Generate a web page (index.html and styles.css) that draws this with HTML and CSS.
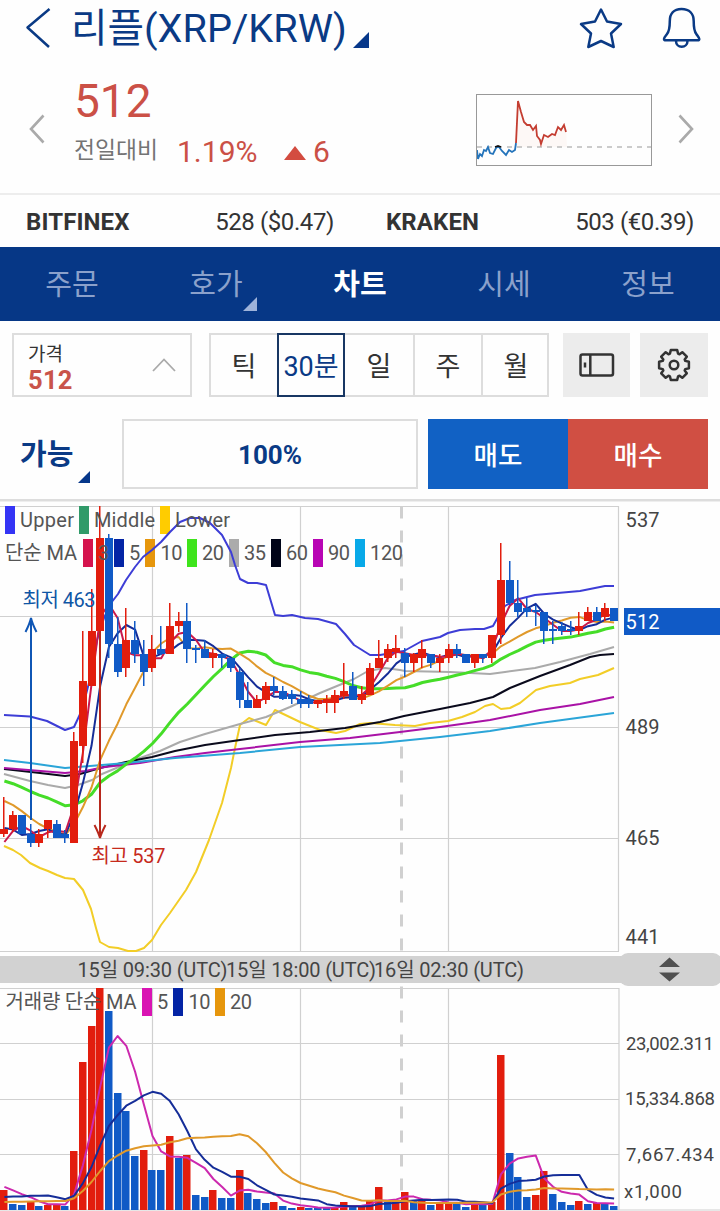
FILE: index.html
```html
<!DOCTYPE html>
<html lang="ko">
<head>
<meta charset="utf-8">
<title>리플(XRP/KRW)</title>
<link rel="stylesheet" href="styles.css">
</head>
<body>
<header class="top">
  <svg class="back" viewBox="0 0 26 42"><path d="M24.5 2 2.5 20.5 24 40"/></svg>
  <h1 class="title">리플(XRP/KRW)</h1>
  <i class="caret caret-title"></i>
  <svg class="star" viewBox="578 6 46 44"><path d="M601 9.5 607 21.5 621 24 611 33.5 613.7 47 601 41 588.3 47 591 33.5 581 24 595 21.5Z"/></svg>
  <svg class="bell" viewBox="662 6 40 44"><path d="M681.500 9C673.500 9 669.800 14 669.800 21C669.800 28 669.500 31 667 34C665 36.500 664 37.500 664 39Q664 40.300 666 40.300H697.500Q699.300 40.300 699.300 39C699.300 37.500 698 36.500 696.300 34C694 31 693.700 28 693.700 21C693.700 14 689.500 9 681.500 9ZM676 41C676 44.500 678.500 46.800 681.700 46.800S687.500 44.500 687.500 41"/></svg>
</header>

<section class="quote">
  <svg class="arrow" viewBox="0 0 18 32"><path d="M15.500 2.500 3 16 15.500 29.500"/></svg>
  <div class="quote-main">
    <div class="quote-price">512</div>
    <div class="quote-change"><span class="vs">전일대비</span><span class="pct">1.19%</span><i class="up"></i><span class="diff">6</span></div>
  </div>
  <svg class="spark" viewBox="0 0 176 72">
    <path class="spark-fill" d="M38 53 42 6 47 24 52 31 58 36 62 45 65 50 72 42 82 38 90 34 91 53Z"/>
    <path class="spark-base" d="M1 53H175"/>
    <path class="spark-low" d="M1 56 2 65 4 60 6 62 8 56 10 57 12 53 14 59 17 60 20 54 21 53 23 53 26 57 30 61 33 56 36 58 39 56 40 49"/>
    <path class="spark-mid" d="M19 53 22 52 25 53"/>
    <path class="spark-high" d="M40 49 42 7 45 18 48 28 51 31 54 31 57 36 60 32 61 42 64 46 65 50 68 41 72 43 76 40 79 41 82 33 85 36 88 31 90 38"/>
    <rect class="spark-box" x=".5" y=".5" width="175" height="71"/>
  </svg>
  <svg class="arrow arrow-next" viewBox="0 0 18 32"><path d="M2.500 2.500 15 16 2.500 29.500"/></svg>
</section>

<section class="exchanges">
  <div class="exchange"><b>BITFINEX</b><span>528 ($0.47)</span></div>
  <div class="exchange"><b>KRAKEN</b><span>503 (€0.39)</span></div>
</section>

<nav class="tabs">
  <a class="tab">주문</a>
  <a class="tab">호가<i class="caret caret-tab"></i></a>
  <a class="tab tab-on">차트</a>
  <a class="tab">시세</a>
  <a class="tab">정보</a>
</nav>

<section class="tools">
  <div class="select">
    <div><div class="select-label">가격</div><div class="select-value">512</div></div>
    <svg class="chevron" viewBox="0 0 24 14"><path d="M1 13 12 1.500 23 13"/></svg>
  </div>
  <div class="periods">
    <span class="period">틱</span><span class="period period-on">30분</span><span class="period">일</span><span class="period">주</span><span class="period">월</span>
  </div>
  <button class="tool tool-rotate"><svg viewBox="0 0 36 24"><rect x="1.500" y="1.500" width="32.500" height="21" rx="2"/><path d="M11.300 2V22M6 9.500V14.500"/></svg></button>
  <button class="tool tool-gear"><svg viewBox="-17 -17 34 34"><path d="M-3.200-14.900H3.200L4.100-11.300 5.500-10.700 8.300-12.800 12.800-8.300 10.700-5.500 11.300-4.100 14.900-3.200V3.200L11.300 4.100 10.700 5.500 12.800 8.300 8.300 12.800 5.500 10.700 4.100 11.300 3.200 14.900H-3.200L-4.100 11.300-5.500 10.700-8.300 12.800-12.800 8.300-10.700 5.500-11.300 4.100-14.900 3.200V-3.200L-11.300-4.100-10.700-5.500-12.800-8.300-8.300-12.800-5.500-10.700-4.100-11.300Z"/><circle r="4.300"/></svg></button>
</section>

<section class="order">
  <div class="avail">가능<i class="caret caret-avail"></i></div>
  <div class="ratio">100%</div>
  <button class="deal sell">매도</button><button class="deal buy">매수</button>
</section>

<svg class="chart" viewBox="0 499 720 712">
  <rect class="rule" x="0" y="499" width="720" height="2.500"/>
  <g class="grid">
    <path d="M0 506.500H618.500V951M0 616.500H618.500M0 727.500H618.500M0 838.500H618.500M0 951.500H619M152.500 507V951M300.500 507V951M448.500 507V951"/>
    <path d="M0 988.500H619V1210M0 1043.500H619M0 1099.500H619M0 1154.500H619M0 1210H720M152.500 989V1210M300.500 989V1210M448.500 989V1210"/>
  </g>
  <path class="day" d="M401.500 506.500V951"/>
  <path class="day" d="M401.500 986.500V1210"/>
  <g class="swatches">
    <rect x="5" y="506" width="10" height="28" fill="#3434f5"/><rect x="79" y="506" width="10" height="28" fill="#309a69"/><rect x="160" y="506" width="10" height="28" fill="#fc0"/>
    <rect x="83" y="539" width="10" height="28" fill="#d5134d"/><rect x="114" y="539" width="10" height="28" fill="#0424a5"/><rect x="145" y="539" width="10" height="28" fill="#e6960c"/><rect x="187" y="539" width="10" height="28" fill="#3ee41c"/><rect x="229" y="539" width="10" height="28" fill="#ababab"/><rect x="271" y="539" width="10" height="28" fill="#000418"/><rect x="313" y="539" width="10" height="28" fill="#b805b4"/><rect x="355" y="539" width="10" height="28" fill="#08a9e8"/>
    <rect x="142" y="988" width="10" height="28" fill="#d914b3"/><rect x="173" y="988" width="10" height="28" fill="#0424a5"/><rect x="215" y="988" width="10" height="28" fill="#e6960c"/>
  </g>
  <g class="lines">
    <polyline stroke="#3d3dd6" points="4,715 30,716.500 47,721 57,726 65,730 74,727 82,710 91,675 97,640 104,618 111,603 118,594 126,580 135,567 143,557 152,550 161,542 170,532 180,522 190,518 200,518 210,523 222,535 231,552 235,565 240,579 248,583 257,583 266,585 275,615 283,616 292,615 305,618 318,619 336,624 345,634 354,645 370,655 380,655 404,651 413,646 422,641 440,637 448,633 460,630 475,629 484,629 493,626 498,617 505,606 515,600 535,595 580,591 605,586 614,586"/>
    <polyline stroke="#f2cd27" points="4,846 13,850 21,855 30,863 40,868 48,871 57,875 65,878 74,879 83,890 91,909 96,928 100,942 109,947 118,948 128,951 136,951 144,948 152,940 161,925 170,913 186,890 196,872 209,840 222,803 231,768 235,748 240,725 249,718 266,725 275,710 300,722 320,730 336,733 345,731 360,724 370,723 395,725 415,726 430,723 448,721 462,717 475,712 485,706 493,704 501,709 510,708 520,703 536,690 550,686 570,683 580,679 598,675 614,668"/>
    <polyline stroke="#aaa" points="4,774 30,781 48,785 65,788 78,785 92,780 102,774 126,764 140,758 160,751 180,742 205,734 240,724 266,717 290,707 320,693 354,679 368,671 385,668 400,670 405,671 450,672 490,674 505,672 535,668 560,662 590,654 614,647"/>
    <polyline stroke="#0a0a1c" points="4,769 40,773 65,776 80,774 100,768 126,762 152,757 175,751 205,745 240,740 275,735 310,732 345,728 380,722 404,716 440,709 470,703 493,697 510,688 540,676 570,665 590,657 600,655 614,654"/>
    <polyline stroke="#a912a6" points="4,768 65,773 85,771 105,767 140,763 175,757 205,753 240,749 300,742 350,738 400,732 440,727 490,720 540,710 580,704 614,697"/>
    <polyline stroke="#2ba5d8" points="4,760 30,763 65,768 90,766 126,763 175,758 240,753 300,747 380,743 440,737 490,731 540,723 614,713"/>
    <polyline id="ma20" stroke="#45dd28" stroke-width="3"/>
    <polyline id="ma10" stroke="#e0992a"/>
    <polyline id="ma5" stroke="#152d98"/>
    <polyline id="ma3" stroke="#c9194c"/>
  </g>
  <g id="candles"></g>
  <g id="volumes"></g>
  <g class="lines">
    <polyline id="vol5" stroke="#cc29ae"/>
    <polyline id="vol10" stroke="#152d98"/>
    <polyline id="vol20" stroke="#e0992a"/>
  </g>
  <g class="marks">
    <path stroke="#0f56b5" d="M31 820V618M25.500 632C27.500 628 30 623 31 618C32 623 34.500 628 36.500 632"/>
    <path stroke="#b8281c" d="M100 631V838M94.500 825C96.500 829 99 834 100 838C101 834 103.500 829 105.500 825"/>
    <text x="22.500" y="607" textLength="73" fill="#0f56a5">최저 463</text>
    <text x="91.500" y="863" textLength="74" fill="#c62a1c">최고 537</text>
  </g>
  <g class="legend">
    <text x="20" y="527" textLength="54">Upper</text><text x="94" y="527" textLength="61">Middle</text><text x="175" y="527" textLength="55">Lower</text>
    <text x="5" y="560" textLength="72">단순 MA</text><text x="98" y="560">3</text><text x="129" y="560">5</text><text x="160.500" y="560" textLength="22">10</text><text x="202" y="560" textLength="22">20</text><text x="244" y="560" textLength="22">35</text><text x="286" y="560" textLength="22">60</text><text x="328" y="560" textLength="22">90</text><text x="370" y="560" textLength="33">120</text>
    <text x="5.500" y="1009" textLength="131">거래량 단순 MA</text><text x="157" y="1009">5</text><text x="188.500" y="1009" textLength="22">10</text><text x="230" y="1009" textLength="22">20</text>
  </g>
  <rect class="bar" x="0" y="956" width="640" height="27"/>
  <rect class="bar" x="619" y="953" width="103" height="33" rx="9"/>
  <path class="grip" d="M659 967 669.500 957.500 680 967ZM659 972.500H680L669.500 981.500Z"/>
  <g class="dates">
    <text x="77.500" y="977" textLength="150">15일 09:30 (UTC)</text><text x="226" y="977" textLength="150">15일 18:00 (UTC)</text><text x="374" y="977" textLength="150">16일 02:30 (UTC)</text>
  </g>
  <g class="axis">
    <text x="625.500" y="527" textLength="34">537</text><text x="625.500" y="734" textLength="34">489</text><text x="625.500" y="845" textLength="34">465</text><text x="625.500" y="944" textLength="34">441</text>
    <rect x="624" y="608" width="96" height="27" fill="#105ac6"/><text class="now" x="625.500" y="628.500" textLength="34">512</text>
    <g class="axis-volume"><text x="626" y="1050" textLength="88">23,002.311</text><text x="625" y="1105" textLength="90">15,334.868</text><text x="626" y="1160.500" textLength="88">7,667.434</text><text x="624" y="1198" textLength="58">x1,000</text></g>
  </g>
</svg>
<script src="chart.js"></script>
</body>
</html>
```
FILE: styles.css
```css
* { box-sizing: border-box; }
body {
  margin: 0;
  width: 720px;
  background: #fefefe;
  color: #333;
  font-family: Roboto, "Noto Sans CJK KR", sans-serif;
  overflow: hidden;
}
svg { display: block; flex: none; }
button { border: 0; padding: 0; font: inherit; }
.caret { display: block; clip-path: polygon(100% 0, 100% 100%, 0 100%); background: #06378a; }

.top { display: flex; height: 64px; padding-left: 25px; color: #0a3a85; }
.top svg { fill: none; stroke: #0a3a85; stroke-width: 2.5; stroke-linejoin: round; }
.back { width: 26px; height: 42px; margin-top: 7px; }
.title { margin: 0 0 0 20px; width: 280px; height: 58px; font-size: 39.7px; font-weight: 400; line-height: 58px; white-space: nowrap; }
.caret-title { width: 16px; height: 16px; margin: 32px 0 0 2px; }
.star { width: 46px; height: 44px; margin: 6px 0 0 209px; }
.bell { width: 40px; height: 44px; margin: 6px 0 0 38px; }

.quote { display: flex; height: 129px; padding-left: 28px; }
.arrow { width: 18px; height: 32px; margin-top: 49px; fill: none; stroke: #aaa; stroke-width: 2.6; }
.quote-main { width: 402px; margin-left: 28px; color: #cb5046; }
.quote-price { height: 68px; padding-top: 12px; font-size: 46px; line-height: 51px; }
.quote-change { display: flex; height: 40px; line-height: 40px; }
.vs { width: 103px; font-size: 22.8px; line-height: 38px; color: #747474; }
.pct { width: 107px; font-size: 30px; }
.diff { font-size: 30px; }
.up { width: 22px; height: 14px; margin: 14px 7px 0 0; background: #d34c40; clip-path: polygon(50% 0, 100% 100%, 0 100%); }
.spark { width: 176px; height: 72px; margin-top: 30px; fill: none; stroke-width: 1.8; }
.spark-box { stroke: #999; stroke-width: 1; }
.spark-base { stroke: #bbb; stroke-width: 1.5; stroke-dasharray: 5 5; }
.spark-fill { fill: #fdf8f6; }
.spark-low { stroke: #2474bb; }
.spark-mid { stroke: #111; }
.spark-high { stroke: #c43d31; }
.arrow-next { margin-left: 25px; }

.exchanges { display: flex; height: 54px; border-top: 2px solid #ededed; font-size: 24px; line-height: 54px; }
.exchange { display: flex; justify-content: space-between; width: 360px; padding: 0 26px 0 26px; }
.exchange b { letter-spacing: .1px; }
.exchange span { letter-spacing: -.4px; }

.tabs { display: flex; height: 74px; background: #063786; color: #8ba1cb; font-size: 29px; line-height: 77px; }
.tab { position: relative; width: 144px; text-align: center; }
.tab-on { color: #fff; font-weight: 700; }
.caret-tab { position: absolute; left: 99px; top: 50px; width: 14px; height: 14px; background: #9eb3da; }

.tools { display: flex; height: 98px; padding: 12px 12px 0; }
.select { display: flex; justify-content: space-between; width: 180px; height: 64px; padding: 6px 14px 0 14px; border: 2px solid #ddd; }
.select-label { font-size: 19px; line-height: 27px; }
.select-value { color: #c9544a; font-size: 25.5px; font-weight: 700; line-height: 24px; letter-spacing: .3px; }
.chevron { width: 24px; height: 14px; margin-top: 17px; fill: none; stroke: #aaa; stroke-width: 1.8; }
.periods { display: flex; width: 340px; height: 64px; margin-left: 17px; border: 2px solid #ddd; }
.period { flex: 0 0 68px; border-left: 2px solid #ddd; font-size: 27px; line-height: 64px; text-align: center; white-space: nowrap; }
.period:first-child { flex-basis: 66px; border-left: 0; }
.period-on + .period { border-left: 0; }
.period-on { flex: 0 0 68px; margin: -2px 0; border: 2px solid #183763; color: #0a3a85; }
.tool { width: 67px; height: 64px; margin-left: 14px; background: #ececec; }
.tool svg { width: 36px; height: 24px; margin: 0 auto; fill: none; stroke: #333; stroke-width: 2.5; stroke-linejoin: round; }
.tool-gear { width: 68px; margin-left: 10px; }
.tool-gear svg { width: 34px; height: 34px; }

.order { display: flex; height: 80px; padding-right: 12px; }
.avail { position: relative; width: 122px; padding-left: 20px; color: #0a3a85; font-size: 29px; font-weight: 700; line-height: 73px; }
.caret-avail { position: absolute; left: 78px; top: 52px; width: 12px; height: 12px; }
.ratio { width: 296px; height: 70px; margin-right: 10px; border: 2px solid #ddd; color: #0a3a85; font-size: 26px; font-weight: 700; line-height: 68px; text-align: center; }
.deal { width: 140px; height: 70px; padding-bottom: 2px; color: #fff; font-size: 26.5px; font-weight: 500; }
.sell { background: #1161c4; }
.buy { background: #d04f43; }

.chart { width: 720px; height: 712px; }
.rule { fill: #ddd; }
.grid { fill: none; stroke: #d0d0d0; stroke-width: 1.2; }
.day { stroke: #d0d0d0; stroke-width: 3; stroke-dasharray: 12 12; }
.lines { fill: none; stroke-width: 2; stroke-linejoin: round; }
.marks path { fill: none; stroke-width: 2; }
.marks text { font-size: 20px; }
.legend text { font-size: 20px; fill: #555; }
.bar { fill: #d2d2d2; }
.grip { fill: #505050; }
.dates text { font-size: 20px; fill: #444; }
.axis text { font-size: 20px; fill: #444; }
.axis-volume text { font-size: 18.500px; }
.axis .now { fill: #fff; }
.rise { fill: #e21d0d; }
.fall { fill: #105ac6; }
```
FILE: chart.js
```js
// direction, wick top, wick bottom, body top, body bottom, volume top, volume direction if it differs
const bars = `R 797 837 829 834 1190|R 811 832 815 829 1204 B|B 815 834 815 834 1205|B 824 847 834 843 1201 R|R 829 847 834 843 1206 B
R 820 838 820 829 1205|B 820 838 824 838 1204 R|B 830 843 834 838 1206|R 732 843 741 843 1151|R 631 763 681 746 1062
R 589 686 631 686 1026|R 506 631 538 631 988|B 534 658 538 644 1011|B 617 677 644 672 1093|R 608 677 640 668 1111 B
B 621 663 640 654 1156|B 640 686 654 672 1150 R|R 635 672 649 668 1170 B|B 626 655 649 654 1170|R 603 654 626 654 1136
R 612 632 621 626 1158 B|B 603 663 621 649 1155 R|B 645 663 648 650 1195|B 640 658 649 658 1197|R 649 668 653 658 1190
B 654 668 654 658 1198|B 658 672 658 668 1198|B 668 708 672 700 1170 R|B 682 708 700 708 1193|R 695 708 699 708 1199 B
R 682 704 686 700 1203 B|B 677 695 686 691 1202 R|B 686 700 691 699 1206|B 690 704 694 699 1208|B 691 708 699 704 1207 R
B 695 708 699 704 1208|R 700 708 700 704 1208 B|R 695 713 699 703 1208 B|R 690 713 695 703 1207|R 663 699 691 696 1202
B 672 700 686 700 1206|R 686 704 694 700 1206|R 663 695 668 695 1201|R 640 668 658 668 1187|R 644 662 649 658 1202 B
R 635 658 648 652 1201|B 648 677 653 663 1192 R|R 653 672 654 663 1201 B|R 640 668 649 658 1200|B 654 668 654 663 1205
R 654 672 658 663 1203|R 644 663 649 658 1203|B 644 658 649 654 1203|B 654 663 654 663 1207|R 654 668 654 663 1203
B 654 663 654 658 1205|R 635 663 635 658 1202|R 543 644 580 635 1055|B 561 605 580 603 1153|B 580 617 603 612 1177
B 598 617 608 612 1197|B 605 626 610 612 1195 R|B 612 644 612 631 1171 R|B 621 644 629 631 1194|B 622 635 626 631 1202
B 621 635 629 631 1205|R 612 635 626 631 1201|R 607 621 612 621 1204 B|B 607 621 612 621 1203 R|R 603 621 608 617 1203 B
B 608 621 608 621 1206`.split(/[|\n]/).map(row => row.trim().split(' '));

const STEP = 8.71;
const centre = i => 4.4 + i * STEP;
const colour = side => (side === 'R' ? 'rise' : 'fall');
const box = (side, x, y, w, h) => `<rect class="${colour(side)}" x="${x.toFixed(1)}" y="${y}" width="${w}" height="${h}"/>`;

let candles = '';
let volumes = '';
bars.forEach(([side, high, low, top, bottom, volume, volumeSide], i) => {
  const x = Math.round(centre(i));
  candles += box(side, x - 1, +high, 1.5, low - high);
  candles += box(side, x - 4, +top, 8, Math.max(2, bottom - top));
  volumes += box(volumeSide || side, x - 4, +volume, 7.5, 1210 - volume);
});
document.getElementById('candles').innerHTML = candles;
document.getElementById('volumes').innerHTML = volumes;

// The history before the first visible bar feeds the averages.
const closes = [...Array(10).fill(761), ...Array(5).fill(774), 807, 807, 848.5, 848.5,
  ...bars.map(b => (b[0] === 'R' ? +b[3] : +b[4]))];
const levels = [...Array(15).fill(1207), ...Array(4).fill(1186), ...bars.map(b => +b[5])];

function average(id, series, span) {
  const points = bars.map((_, i) => {
    const end = i + 20;
    const part = series.slice(end - span, end);
    return centre(i).toFixed(1) + ',' + (part.reduce((a, b) => a + b) / span).toFixed(1);
  });
  document.getElementById(id).setAttribute('points', points.join(' '));
}
average('ma3', closes, 3);
average('ma5', closes, 5);
average('ma10', closes, 10);
average('ma20', closes, 20);
average('vol5', levels, 5);
average('vol10', levels, 10);
average('vol20', levels, 20);
```
